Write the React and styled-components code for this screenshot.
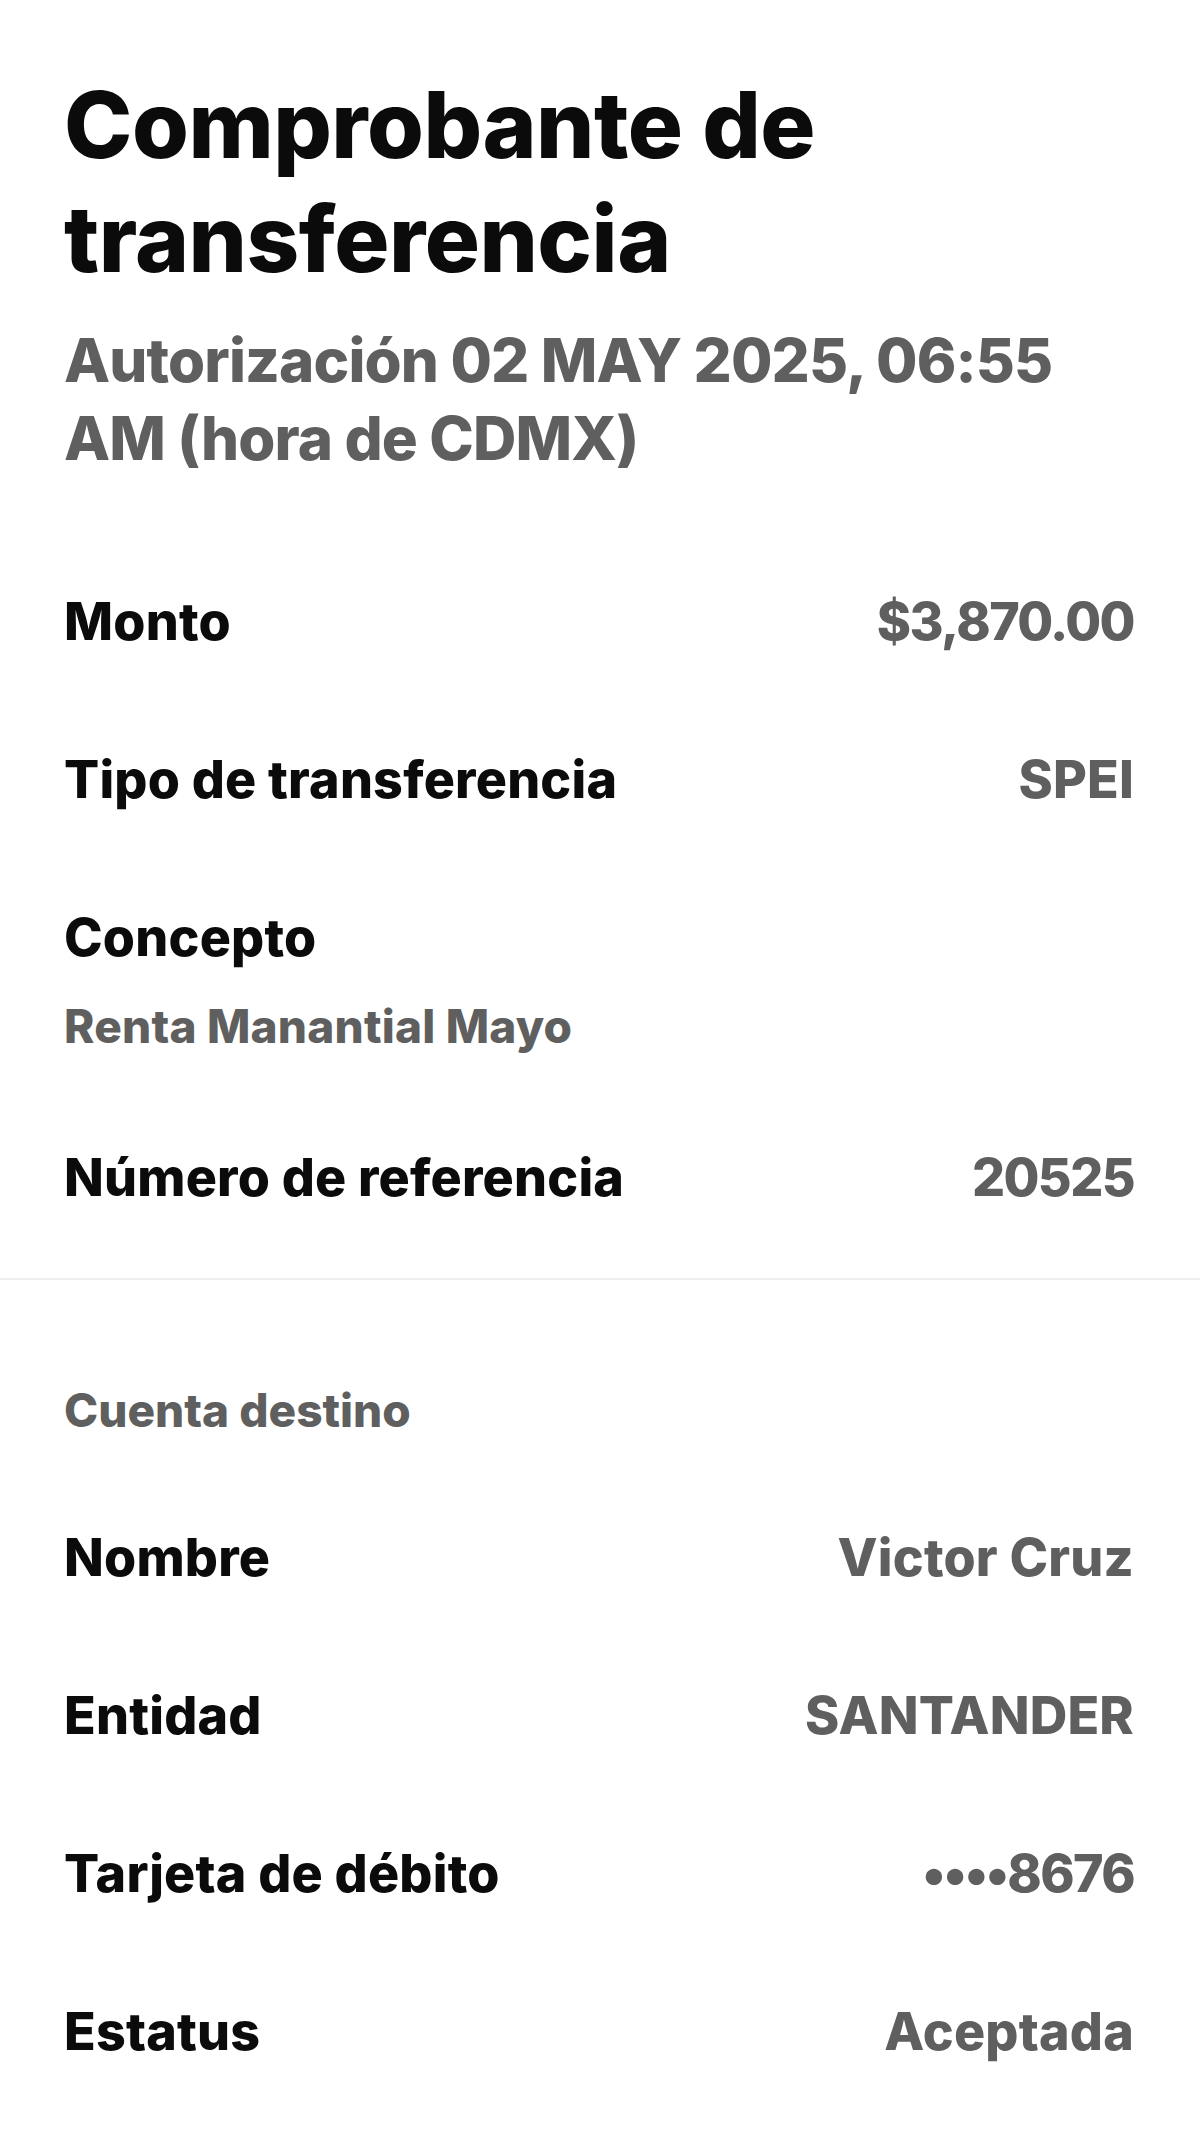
import React from "react";
import styled, { createGlobalStyle } from "styled-components";

const Global = createGlobalStyle`
  html, body {
    margin: 0;
    padding: 0;
    background: #ffffff;
  }
  body {
    font-family: Inter, "Noto Sans", "Liberation Sans", sans-serif;
    -webkit-font-smoothing: antialiased;
  }
`;

const Page = styled.main`
  width: 1200px;
  min-height: 2141px;
  box-sizing: border-box;
  background: #ffffff;
  padding-top: 68px;
`;

const Header = styled.header`
  padding: 0 66px 0 64px;
  display: flex;
  flex-direction: column;
  gap: 25px;
`;

const Title = styled.h1`
  margin: 0;
  font-size: 92px;
  line-height: 114px;
  font-weight: 800;
  letter-spacing: -0.5px;
  color: #0b0b0b;
`;

const Subtitle = styled.p`
  margin: 0;
  font-size: 60px;
  line-height: 78px;
  font-weight: 800;
  letter-spacing: -0.85px;
  color: #5f5f5f;
`;

const Section = styled.section`
  padding: ${(p) => p.$pad || "0"};
  display: flex;
  flex-direction: column;
`;

const Divider = styled.hr`
  margin: 0;
  border: none;
  height: 2px;
  background: #efefef;
`;

const Row = styled.div`
  display: flex;
  flex-direction: ${(p) => (p.$stacked ? "column" : "row")};
  justify-content: space-between;
  align-items: ${(p) => (p.$stacked ? "flex-start" : "baseline")};
  gap: ${(p) => (p.$stacked ? "29px" : "24px")};
  padding: ${(p) => (p.$stacked ? "48px 66px 45px 64px" : "48px 66px 48px 64px")};
`;

const Label = styled.span`
  font-size: 52px;
  line-height: 62px;
  font-weight: 800;
  letter-spacing: 0.2px;
  color: #0b0b0b;
`;

const Value = styled.span`
  font-size: ${(p) => (p.$small ? "46px" : "52px")};
  line-height: ${(p) => (p.$small ? "56px" : "62px")};
  font-weight: 800;
  letter-spacing: ${(p) => (p.$numeric ? "-1.6px" : "0.2px")};
  color: #5f5f5f;
  text-align: right;
`;

const SectionTitle = styled.h2`
  margin: 0;
  padding: 102px 66px 41px 64px;
  font-size: 46px;
  line-height: 56px;
  font-weight: 800;
  letter-spacing: 0;
  color: #5f5f5f;
`;

const detailRows = [
  { label: "Monto", value: "$3,870.00", numeric: true },
  { label: "Tipo de transferencia", value: "SPEI" },
];

const accountRows = [
  { label: "Nombre", value: "Victor Cruz" },
  { label: "Entidad", value: "SANTANDER" },
  { label: "Tarjeta de débito", value: "••••8676", numeric: true },
  { label: "Estatus", value: "Aceptada" },
];

export default function App() {
  return (
    <Page>
      <Global />
      <Header>
        <Title>
          Comprobante de
          <br />
          transferencia
        </Title>
        <Subtitle>
          Autorización 02 MAY 2025, 06:55
          <br />
          AM (hora de CDMX)
        </Subtitle>
      </Header>

      <Section $pad="66px 0 21px">
        {detailRows.map((r) => (
          <Row key={r.label}>
            <Label>{r.label}</Label>
            <Value $numeric={r.numeric}>{r.value}</Value>
          </Row>
        ))}
        <Row $stacked>
          <Label>Concepto</Label>
          <Value $small>Renta Manantial Mayo</Value>
        </Row>
        <Row>
          <Label>Número de referencia</Label>
          <Value $numeric>20525</Value>
        </Row>
      </Section>

      <Divider />

      <Section>
        <SectionTitle>Cuenta destino</SectionTitle>
        {accountRows.map((r) => (
          <Row key={r.label}>
            <Label>{r.label}</Label>
            <Value $numeric={r.numeric}>{r.value}</Value>
          </Row>
        ))}
      </Section>
    </Page>
  );
}
